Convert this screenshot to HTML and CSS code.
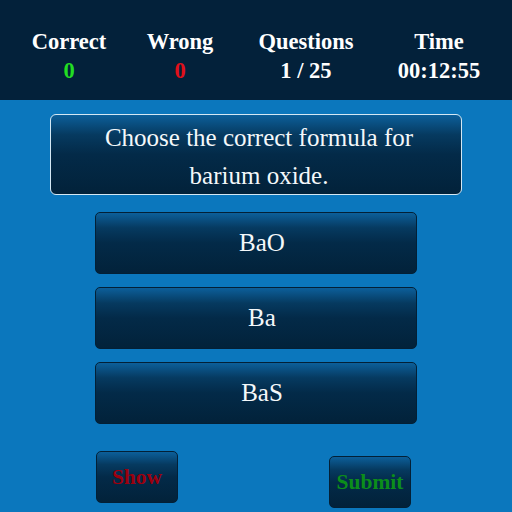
FILE: index.html
```html
<!DOCTYPE html>
<html>
<head>
<meta charset="utf-8">
<link rel="stylesheet" href="styles.css">
</head>
<body>
<header class="stats">
  <div class="stat"><div class="label">Correct</div><div class="value good">0</div></div>
  <div class="stat"><div class="label">Wrong</div><div class="value bad">0</div></div>
  <div class="stat"><div class="label">Questions</div><div class="value">1 / 25</div></div>
  <div class="stat"><div class="label">Time</div><div class="value">00:12:55</div></div>
</header>
<main class="quiz">
  <div class="question">Choose the correct formula for<br>barium oxide.</div>
  <div class="answers">
    <button class="answer">BaO</button>
    <button class="answer">Ba</button>
    <button class="answer">BaS</button>
  </div>
  <div class="actions">
    <button class="action show">Show</button>
    <button class="action submit">Submit</button>
  </div>
</main>
</body>
</html>
```
FILE: styles.css
```css
html, body {
  margin: 0;
  padding: 0;
  background: #0b77bd;
  font-family: "Liberation Serif", "Times New Roman", serif;
}
body {
  width: 512px;
  height: 512px;
  overflow: hidden;
}
.stats {
  height: 100px;
  background: #03213a;
  display: grid;
  grid-template-columns: 108px 114px 138px 128px;
  padding-left: 15px;
  padding-top: 27px;
  box-sizing: border-box;
  color: #fff;
}
.stat {
  text-align: center;
  font-weight: bold;
  font-size: 22.5px;
}
.label { line-height: 29px; }
.value { line-height: 29px; }
.good { color: #22dd22; }
.bad { color: #e0101a; }
.quiz {
  padding-top: 14px;
  display: flex;
  flex-direction: column;
  align-items: center;
}
.question {
  width: 412px;
  height: 81px;
  box-sizing: border-box;
  border: 1px solid #d4e8f4;
  border-radius: 6px;
  background: linear-gradient(to bottom, #0c5f9a 0%, #063a60 25%, #032a48 50%, #02223a 100%);
  color: #f4f8fa;
  font-size: 25px;
  line-height: 38px;
  text-align: center;
  padding: 4px 0 0 6px;
}
.answers {
  margin-top: 17px;
  display: flex;
  flex-direction: column;
  gap: 13px;
}
.answer, .action {
  font-family: "Liberation Serif", "Times New Roman", serif;
  border: 1px solid #032036;
  border-radius: 5px;
  background: linear-gradient(to bottom, #0c5f9a 0%, #063a60 25%, #032a48 50%, #02223a 100%);
  padding: 0;
  cursor: pointer;
}
.answer {
  width: 322px;
  height: 62px;
  color: #f4f8fa;
  font-size: 25px;
  padding-left: 12px;
}
.actions {
  align-self: stretch;
  display: flex;
  justify-content: space-between;
  align-items: flex-start;
  padding: 0 101px 0 96px;
  margin-top: 27px;
}
.action {
  width: 82px;
  height: 52px;
  font-size: 21.5px;
  font-weight: bold;
}
.show { color: #9c000e; }
.submit { color: #0c8e1a; margin-top: 5px; }
```
